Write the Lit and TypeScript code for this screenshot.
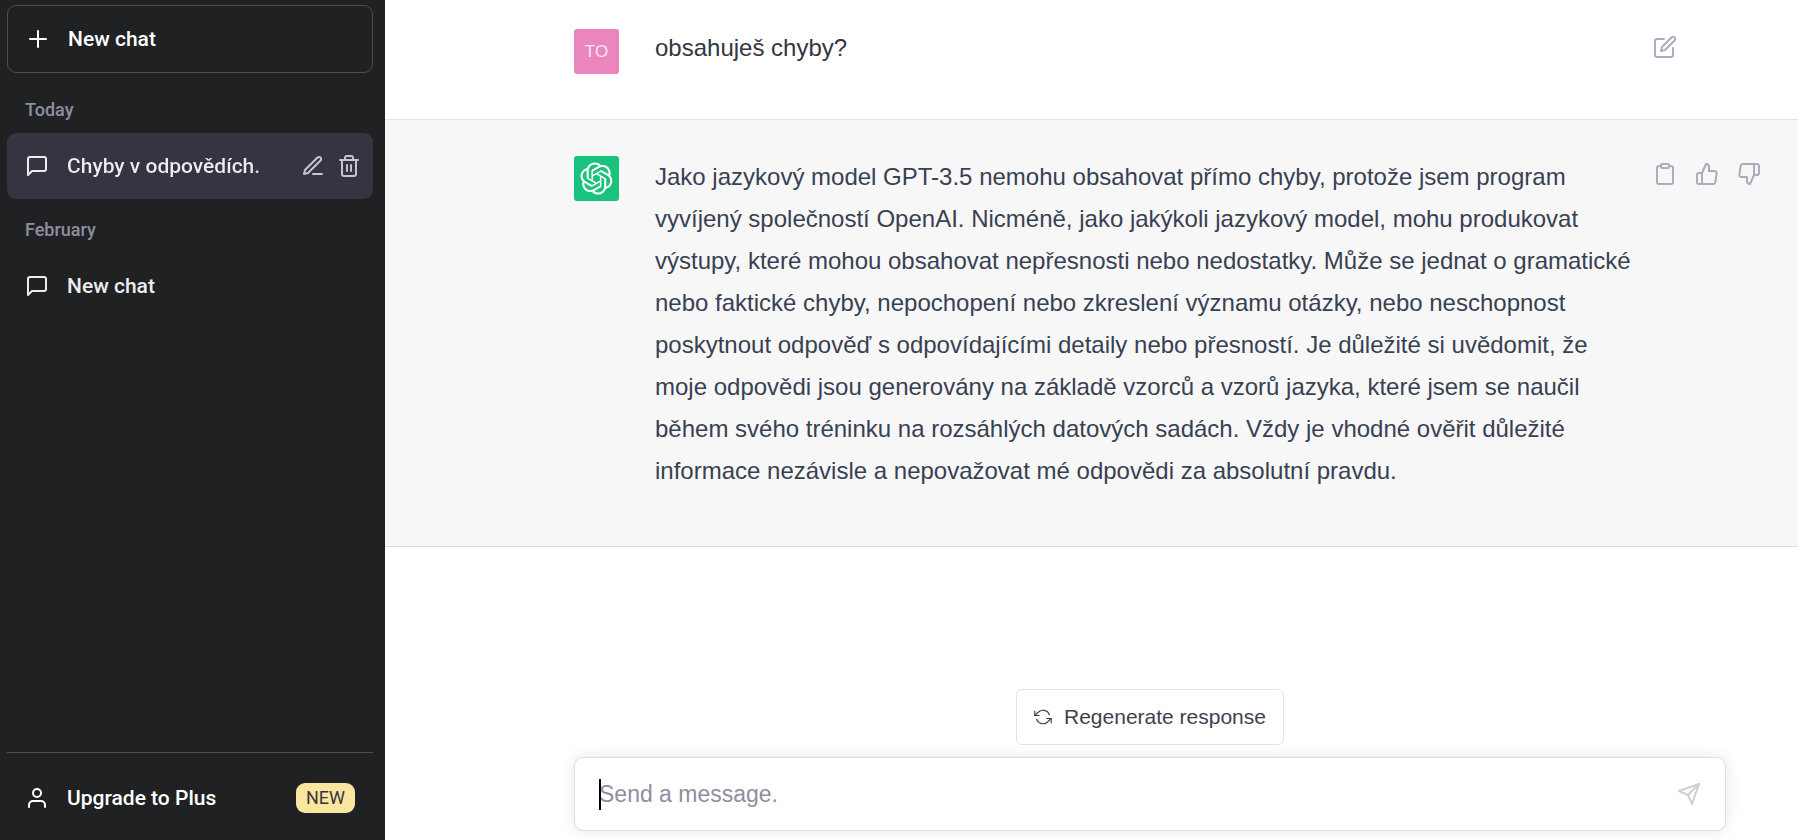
import { LitElement, html, css, svg, SVGTemplateResult } from "lit";
import { customElement, property } from "lit/decorators.js";
import { classMap } from "lit/directives/class-map.js";

const icons: Record<string, SVGTemplateResult> = {
  plus: svg`<path d="M12 4v16M4 12h16"/>`,
  chat: svg`<path d="M21 15a2 2 0 0 1-2 2H7l-4 4V5a2 2 0 0 1 2-2h14a2 2 0 0 1 2 2z"/>`,
  pencil: svg`<path d="M12 20h9"/><path d="M16.5 3.5a2.121 2.121 0 0 1 3 3L7 19l-4 1 1-4L16.5 3.5z"/>`,
  trash: svg`<path d="M3 6h18M19 6v14a2 2 0 0 1-2 2H7a2 2 0 0 1-2-2V6m3 0V4a2 2 0 0 1 2-2h4a2 2 0 0 1 2 2v2M10 11v6M14 11v6"/>`,
  user: svg`<path d="M20 21v-2a4 4 0 0 0-4-4H8a4 4 0 0 0-4 4v2"/><circle cx="12" cy="7" r="4"/>`,
  edit: svg`<path d="M11 4H4a2 2 0 0 0-2 2v14a2 2 0 0 0 2 2h14a2 2 0 0 0 2-2v-7"/><path d="M18.5 2.5a2.121 2.121 0 0 1 3 3L12 15l-4 1 1-4 9.500-9.500z"/>`,
  clipboard: svg`<path d="M16 4h2a2 2 0 0 1 2 2v14a2 2 0 0 1-2 2H6a2 2 0 0 1-2-2V6a2 2 0 0 1 2-2h2"/><rect x="8" y="2" width="8" height="4" rx="1"/>`,
  up: svg`<path d="M14 9V5a3 3 0 0 0-3-3l-4 9v11h11.280a2 2 0 0 0 2-1.700l1.380-9a2 2 0 0 0-2-2.300zM7 22H4a2 2 0 0 1-2-2v-7a2 2 0 0 1 2-2h3"/>`,
  down: svg`<path d="M10 15v4a3 3 0 0 0 3 3l4-9V2H5.720a2 2 0 0 0-2 1.700l-1.380 9a2 2 0 0 0 2 2.300zm7-13h2.670A2.310 2.310 0 0 1 22 4v7a2.310 2.310 0 0 1-2.330 2H17"/>`,
  refresh: svg`<path d="M1 4v6h6M23 20v-6h-6"/><path d="M20.490 9A9 9 0 0 0 5.640 5.640L1 10m22 4l-4.640 4.360A9 9 0 0 1 3.510 15"/>`,
  send: svg`<path d="M22 2L11 13"/><path d="M22 2l-7 20-4-9-9-4 20-7z"/>`,
};

@customElement("ui-icon")
class UiIcon extends LitElement {
  @property() name = "";
  static styles = css`
    :host { display: block; flex: none; width: 24px; height: 24px; }
    .glyph {
      display: block; width: 100%; height: 100%; fill: none; stroke: currentColor;
      stroke-width: var(--stroke, 2); stroke-linecap: round; stroke-linejoin: round;
    }
  `;
  render() {
    return html`<svg class="glyph" viewBox="0 0 24 24" aria-hidden="true">${icons[this.name]}</svg>`;
  }
}

const reset = css`
  * { box-sizing: border-box; }
  button {
    font: inherit; color: inherit; background: none; border: 0;
    margin: 0; padding: 0; text-align: left; cursor: pointer;
  }
  a { color: inherit; text-decoration: none; }
`;

interface Chat { title: string; active?: boolean; }
const history: { label: string; chats: Chat[] }[] = [
  { label: "Today", chats: [{ title: "Chyby v odpovědích.", active: true }] },
  { label: "February", chats: [{ title: "New chat" }] },
];

@customElement("chat-sidebar")
class ChatSidebar extends LitElement {
  static styles = [reset, css`
    :host {
      display: flex; flex-direction: column; box-sizing: border-box;
      padding: 5px 12px 9px 7px; background: #202123; color: #fff;
      font: 500 21px/30px Roboto, sans-serif;
    }
    .row {
      display: flex; align-items: center; gap: 18px; width: 100%;
      padding: 18px; border-radius: 9px;
    }
    .new { border: 1px solid #4d4d4f; margin-bottom: 6px; }
    .label {
      margin: 0; padding: 19px 18px 11px; color: #8e8ea0;
      font-size: 18px; line-height: 24px; font-weight: 500;
    }
    .list { list-style: none; margin: 0; padding: 0; }
    .item { display: flex; align-items: center; border-radius: 9px; color: #ececf1; }
    .item.active { background: #343541; padding-right: 12px; }
    .item .row { flex: 1; min-width: 0; }
    .title { flex: 1; min-width: 0; overflow: hidden; white-space: nowrap; }
    .active .title {
      background: linear-gradient(to right, #ececf1 85%, #8e8ea0 100%);
      -webkit-background-clip: text; background-clip: text; color: transparent;
    }
    .tools { display: flex; gap: 12px; color: #c5c5d2; }
    .foot { margin-top: auto; border-top: 1px solid #4d4d4f; padding-top: 12px; }
    .grow { flex: 1; }
    .badge {
      padding: 3px 10px; border-radius: 9px; background: #fae69e; color: #343541;
      font-size: 18px; line-height: 24px; font-weight: 400;
    }
  `];
  render() {
    return html`
      <button class="row new"><ui-icon name="plus"></ui-icon>New chat</button>
      <nav>
        ${history.map((g) => html`
          <h3 class="label">${g.label}</h3>
          <ul class="list">
            ${g.chats.map((c) => html`
              <li class=${classMap({ item: true, active: !!c.active })}>
                <a class="row" href="#"><ui-icon name="chat"></ui-icon><span class="title">${c.title}</span></a>
                ${c.active ? html`<span class="tools">
                  <button aria-label="Rename"><ui-icon name="pencil"></ui-icon></button>
                  <button aria-label="Delete"><ui-icon name="trash"></ui-icon></button>
                </span>` : ""}
              </li>`)}
          </ul>`)}
      </nav>
      <div class="foot">
        <button class="row"><ui-icon name="user"></ui-icon><span class="grow">Upgrade to Plus</span><span class="badge">NEW</span></button>
      </div>`;
  }
}

const answer =
  "Jako jazykový model GPT-3.5 nemohu obsahovat přímo chyby, protože jsem program vyvíjený společností OpenAI. Nicméně, jako jakýkoli jazykový model, mohu produkovat výstupy, které mohou obsahovat nepřesnosti nebo nedostatky. Může se jednat o gramatické nebo faktické chyby, nepochopení nebo zkreslení významu otázky, nebo neschopnost poskytnout odpověď s odpovídajícími detaily nebo přesností. Je důležité si uvědomit, že moje odpovědi jsou generovány na základě vzorců a vzorů jazyka, které jsem se naučil během svého tréninku na rozsáhlých datových sadách. Vždy je vhodné ověřit důležité informace nezávisle a nepovažovat mé odpovědi za absolutní pravdu.";

const logo = svg`<path d="M37.5324 16.8707C37.9808 15.5241 38.1363 14.0974 37.9886 12.6859C37.8409 11.2744 37.3934 9.91076 36.676 8.68622C35.6126 6.83404 33.9882 5.3676 32.0373 4.4985C30.0864 3.62941 27.9098 3.40259 25.8215 3.85078C24.8796 2.7893 23.7219 1.94125 22.4257 1.36341C21.1295 0.785575 19.7249 0.491269 18.3058 0.500197C16.1708 0.495044 14.0893 1.16803 12.3614 2.42214C10.6335 3.67624 9.34853 5.44666 8.6917 7.47815C7.30085 7.76286 5.98686 8.3414 4.8377 9.17505C3.68854 10.0087 2.73073 11.0782 2.02839 12.312C0.956464 14.1591 0.498905 16.2988 0.721698 18.4228C0.944492 20.5467 1.83612 22.5449 3.268 24.1293C2.81966 25.4759 2.66413 26.9026 2.81182 28.3141C2.95951 29.7256 3.40701 31.0892 4.12437 32.3138C5.18791 34.1659 6.8123 35.6322 8.76321 36.5013C10.7141 37.3704 12.8907 37.5973 14.9789 37.1492C15.9208 38.2107 17.0786 39.0587 18.3747 39.6366C19.6709 40.2144 21.0755 40.5087 22.4946 40.4998C24.6307 40.5054 26.7133 39.8321 28.4418 38.5772C30.1704 37.3223 31.4556 35.5506 32.1119 33.5179C33.5027 33.2332 34.8167 32.6547 35.9659 31.821C37.115 30.9874 38.0728 29.9178 38.7752 28.684C39.8458 26.8371 40.3023 24.6979 40.0789 22.5748C39.8556 20.4517 38.9639 18.4544 37.5324 16.8707ZM22.4978 37.8849C20.7443 37.8874 19.0459 37.2733 17.6994 36.1501C17.7601 36.117 17.8666 36.0586 17.936 36.0161L25.9004 31.4156C26.1003 31.3019 26.2663 31.137 26.3813 30.9378C26.4964 30.7386 26.5563 30.5124 26.5549 30.2825V19.0542L29.9213 20.998C29.9389 21.0068 29.9541 21.0198 29.9656 21.0359C29.977 21.052 29.9842 21.0707 29.9867 21.0902V30.3889C29.9842 32.375 29.1946 34.2791 27.7909 35.6841C26.3872 37.0892 24.4838 37.8806 22.4978 37.8849ZM6.39227 31.0064C5.51397 29.4888 5.19742 27.7107 5.49804 25.9832C5.55718 26.0187 5.66048 26.0818 5.73461 26.1244L13.699 30.7248C13.8975 30.8408 14.1233 30.902 14.3532 30.902C14.583 30.902 14.8088 30.8408 15.0073 30.7248L24.731 25.1103V28.9979C24.7321 29.0177 24.7283 29.0376 24.7199 29.0556C24.7115 29.0736 24.6988 29.0893 24.6829 29.1012L16.6317 33.7497C14.9096 34.7416 12.8643 35.0097 10.9447 34.4954C9.02506 33.9811 7.38785 32.7263 6.39227 31.0064ZM4.29707 13.6194C5.17156 12.0998 6.55279 10.9364 8.19885 10.3327C8.19885 10.4013 8.19491 10.5228 8.19491 10.6071V19.808C8.19351 20.0378 8.25334 20.2638 8.36823 20.4629C8.48312 20.6619 8.64893 20.8267 8.84863 20.9404L18.5723 26.5542L15.206 28.4979C15.1894 28.5089 15.1703 28.5155 15.1505 28.5173C15.1307 28.5191 15.1107 28.516 15.0924 28.5082L7.04046 23.8557C5.32135 22.8601 4.06716 21.2235 3.55289 19.3046C3.03862 17.3858 3.30624 15.3413 4.29707 13.6194ZM31.955 20.0556L22.2312 14.4411L25.5976 12.4981C25.6142 12.4872 25.6333 12.4805 25.6531 12.4787C25.6729 12.4769 25.6928 12.4801 25.7111 12.4879L33.7631 17.1364C34.9967 17.849 36.0017 18.8982 36.6606 20.1613C37.3194 21.4244 37.6047 22.849 37.4832 24.2684C37.3617 25.6878 36.8382 27.0432 35.9743 28.1759C35.1103 29.3086 33.9415 30.1717 32.6047 30.6641C32.6047 30.5947 32.6047 30.4733 32.6047 30.3889V21.188C32.6066 20.9586 32.5474 20.7328 32.4332 20.5338C32.319 20.3348 32.154 20.1698 31.955 20.0556ZM35.3055 15.0128C35.2464 14.9765 35.1431 14.9142 35.069 14.8717L27.1045 10.2712C26.906 10.1554 26.6803 10.0943 26.4504 10.0943C26.2206 10.0943 25.9948 10.1554 25.7963 10.2712L16.0726 15.8858V11.9982C16.0715 11.9783 16.0753 11.9585 16.0837 11.9405C16.0921 11.9225 16.1048 11.9068 16.1207 11.8949L24.1719 7.25025C25.4053 6.53903 26.8158 6.19376 28.2383 6.25482C29.6608 6.31589 31.0364 6.78077 32.2044 7.59508C33.3723 8.40939 34.2842 9.53945 34.8334 10.8531C35.3826 12.1667 35.5464 13.6095 35.3055 15.0128ZM14.2424 21.9419L10.8752 19.9981C10.8576 19.9893 10.8423 19.9763 10.8309 19.9602C10.8195 19.9441 10.8122 19.9254 10.8098 19.9058V10.6071C10.8107 9.18295 11.2173 7.78848 11.9819 6.58696C12.7466 5.38544 13.8377 4.42659 15.1275 3.82264C16.4173 3.21869 17.8524 2.99464 19.2649 3.1767C20.6775 3.35876 22.0089 3.93941 23.1034 4.85067C23.0427 4.88379 22.937 4.94215 22.8668 4.98473L14.9024 9.58517C14.7025 9.69878 14.5366 9.86356 14.4215 10.0626C14.3065 10.2616 14.2466 10.4877 14.2479 10.7175L14.2424 21.9419ZM16.071 17.9991L20.4018 15.4978L24.7325 17.9975V22.9985L20.4018 25.4983L16.071 22.9985V17.9991Z"/>`;

@customElement("app-root")
class AppRoot extends LitElement {
  static styles = [reset, css`
    :host {
      display: grid; grid-template-columns: 385px minmax(0, 1fr); min-height: 100vh;
      background: #fff; color: #343541; font: 24px/42px "Liberation Sans", Arial, sans-serif;
    }
    .main { display: flex; flex-direction: column; }
    .message {
      display: grid; grid-template-columns: 45px minmax(0, 1fr) 120px; align-items: start;
      padding: 36px 31px 54px 189px; border-bottom: 1px solid #d9d9e3;
    }
    .user { padding-top: 29px; padding-bottom: 45px; border-color: #e5e5e6; }
    .user .text { line-height: 38px; }
    .bot { background: #f7f7f8; color: #374151; }
    .avatar {
      display: grid; place-items: center; width: 45px; height: 45px; border-radius: 3px;
      background: #ea85bd; color: #fbe3f1; font-size: 17px; line-height: 24px;
    }
    .bot .avatar { background: #19c37d; color: #fff; }
    .logo { width: 33px; height: 33px; fill: currentColor; }
    .text { margin: 0 12px 0 36px; }
    .actions { display: flex; gap: 6px; color: #acacbe; }
    .actions button { padding: 6px; }
    .bottom {
      display: flex; flex-direction: column; align-items: center; gap: 12px;
      margin-top: auto; padding: 24px 72px 9px 189px;
    }
    .regenerate {
      display: flex; align-items: center; gap: 12px; padding: 12px 17px;
      border: 1px solid #e3e3e6; border-radius: 6px; background: #fff;
      color: #40414f; font-size: 21px; line-height: 30px;
    }
    .regenerate ui-icon { width: 18px; height: 18px; --stroke: 1.5; }
    .composer {
      position: relative; display: flex; align-items: center; width: 100%;
      padding: 15px 24px; border: 1px solid #dfdfe2; border-radius: 9px;
      background: #fff; box-shadow: 0 0 15px rgba(0, 0, 0, 0.1);
    }
    .field {
      flex: 1; min-width: 0; height: 42px; padding: 0; border: 0; outline: 0;
      background: none; font: inherit; font-size: 23px; color: #343541;
    }
    .field::placeholder { color: #8e8ea0; opacity: 1; }
    .caret { position: absolute; left: 24px; top: 21px; width: 2px; height: 31px; background: #000; }
    .send { color: #cfcfd4; }
  `];
  render() {
    const act = (name: string, label: string) =>
      html`<button aria-label=${label}><ui-icon name=${name}></ui-icon></button>`;
    return html`
      <chat-sidebar></chat-sidebar>
      <main class="main">
        <article class="message user">
          <span class="avatar">TO</span>
          <div class="text">obsahuješ chyby?</div>
          <div class="actions">${act("edit", "Edit")}</div>
        </article>
        <article class="message bot">
          <span class="avatar"><svg class="logo" viewBox="0 0 41 41" role="img" aria-label="ChatGPT">${logo}</svg></span>
          <div class="text">${answer}</div>
          <div class="actions">${act("clipboard", "Copy")}${act("up", "Good response")}${act("down", "Bad response")}</div>
        </article>
        <form class="bottom" @submit=${(e: Event) => e.preventDefault()}>
          <button class="regenerate" type="button"><ui-icon name="refresh"></ui-icon>Regenerate response</button>
          <div class="composer">
            <input class="field" type="text" aria-label="Send a message." placeholder="Send a message." />
            <span class="caret"></span>
            <button class="send" aria-label="Send"><ui-icon name="send"></ui-icon></button>
          </div>
        </form>
      </main>`;
  }
}
